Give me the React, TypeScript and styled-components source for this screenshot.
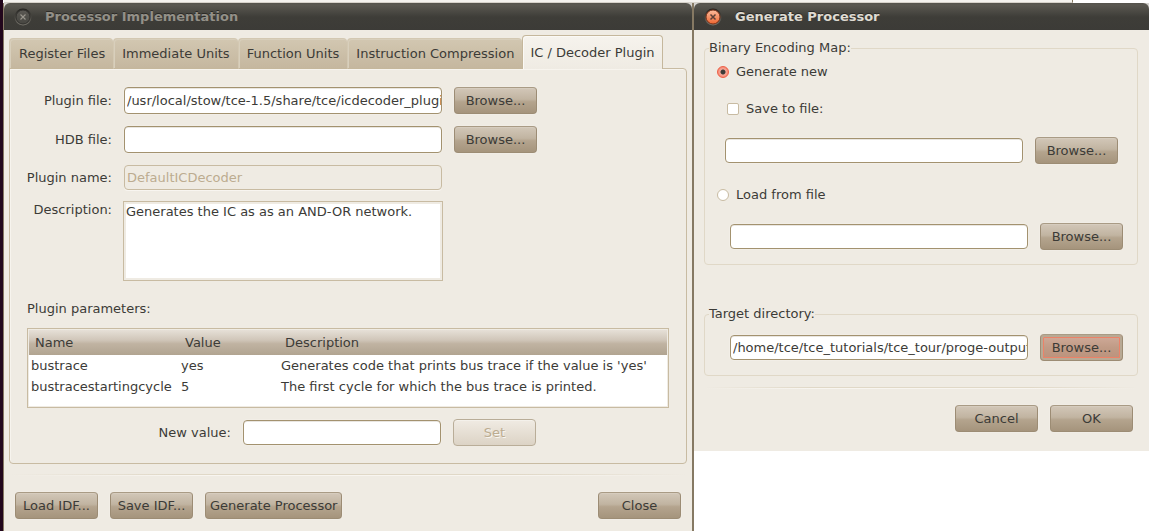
import React, { useState } from "react";
import styled, { createGlobalStyle, css } from "styled-components";

const GlobalStyle = createGlobalStyle`
  *, *::before, *::after { box-sizing: border-box; }
  body {
    margin: 0;
    background: #ffffff;
    color: #3c3b37;
    font: 13px/18px "DejaVu Sans", sans-serif;
  }
  button, input, textarea { font: inherit; color: inherit; margin: 0; }
`;

const Desktop = styled.div`
  min-height: 100vh;
  display: flex;
  flex-direction: column;
  border-left: 3px solid #22071c;
`;

const BackgroundWindow = styled.div`
  height: 3px;
  width: 93.3%;
  margin-left: 1px;
  background: #f4f2ee;
  border-right: 1px solid #857a63;
  border-bottom: 1px solid #d6d2ca;
  flex: none;
`;

const Windows = styled.div`
  flex: 1;
  display: grid;
  grid-template-columns: 691fr 455fr;
  align-items: start;
`;

const Window = styled.section<{ $main?: boolean }>`
  display: flex;
  flex-direction: column;
  min-width: 0;
  background: linear-gradient(#d4d2ce 8px, #efebe3 8px);
  ${(p) =>
    p.$main &&
    css`
      align-self: stretch;
      border: solid #867963;
      border-width: 0 2px 0 1px;
    `}
`;

const TitleBar = styled.header`
  height: 27px;
  flex: none;
  display: flex;
  align-items: center;
  gap: 13px;
  padding: 0 10px;
  border-radius: 6px 6px 0 0;
  background: linear-gradient(#55534c, #5a5851 2px, #3e3d38 14px, #3c3b37);
`;

const CloseWindow = styled.button`
  width: 18px;
  height: 18px;
  padding: 0;
  border: 0;
  background: none;
  svg { display: block; }
`;

const Title = styled.h1<{ $active?: boolean }>`
  margin: 0;
  font-size: 13px;
  line-height: 18px;
  font-weight: bold;
  color: ${(p) => (p.$active ? "#dfdbd2" : "#939088")};
  text-shadow: 0 -1px 0 #2b2a27;
`;

const MainBody = styled.div`
  padding: 5px 5px 12px;
`;

const Tabs = styled.div`
  display: flex;
  align-items: flex-end;
  position: relative;
  margin-bottom: -1px;
`;

const Tab = styled.button<{ $active: boolean }>`
  height: ${(p) => (p.$active ? 34 : 31)}px;
  padding: 0 8px;
  border: 1px solid #d3c8b2;
  border-bottom-color: #c5b79c;
  border-right-width: 0;
  border-radius: 4px 4px 0 0;
  background: linear-gradient(#d2c7b1, #c5b79f);
  box-shadow: inset 1px 1px 0 #d8cfbc;
  white-space: nowrap;
  &:first-child { padding-left: 9px; }
  ${(p) =>
    p.$active &&
    css`
      padding: 0 7px;
      border-color: #c5b79c;
      border-width: 1px 1px 0;
      background: linear-gradient(#f6f3ed, #efebe3);
      box-shadow: inset 1px 1px 0 #fbf9f5;
    `}
`;

const Panel = styled.div`
  padding: 18px 17px 17px;
  border: 1px solid #c8bba2;
  border-radius: 0 4px 4px 4px;
  box-shadow: inset 1px 1px 0 #f7f4ee;
`;

const FormRow = styled.div<{ $space?: number; $top?: boolean }>`
  display: flex;
  align-items: ${(p) => (p.$top ? "flex-start" : "center")};
  gap: 12px;
  margin-top: ${(p) => p.$space ?? 0}px;
`;

const Label = styled.label<{ $width?: number }>`
  width: ${(p) => p.$width ?? 85}px;
  flex: none;
  display: flex;
  justify-content: flex-end;
  white-space: nowrap;
`;

const TextField = styled.input<{ $width?: number; $tall?: boolean }>`
  ${(p) => (p.$width ? `flex: 0 1 ${p.$width}px;` : "flex: 1;")}
  min-width: 0;
  height: ${(p) => (p.$tall ? 27 : 25)}px;
  padding: 0 0 0 2px;
  border: 1px solid #a3926f;
  border-radius: 4px;
  background: #ffffff;
  box-shadow: 0 0 0 1px #f2eee7, inset 0 1px 0 #e9e6e1;
  outline: 0;
  &:disabled {
    color: #bcac90;
    border-color: #c8bba2;
    background: #efebe3;
    box-shadow: 0 1px 0 #f8f5f0;
  }
`;

const DescriptionBox = styled.textarea`
  && { margin: 0 -1px; }
  flex: 0 1 320px;
  min-width: 0;
  height: 80px;
  padding: 1px 2px;
  border: 1px solid #c8bba2;
  outline: 0;
  background: #ffffff;
  box-shadow: inset 0 0 0 2px #efebe3;
  resize: none;
`;

const Button = styled.button<{ $focused?: boolean }>`
  min-width: 83px;
  height: 27px;
  flex: none;
  padding: 0 4px;
  border: 1px solid #9c8c74;
  border-top-color: #a99b85;
  border-radius: 4px;
  background: linear-gradient(#d2c7b8, #c1b4a1 45%, #b4a48e 55%, #a5947c);
  box-shadow: inset 0 1px 0 #d6ccbe, 0 0 0 1px #f1ede6;
  white-space: nowrap;
  &:disabled {
    color: #bcac90;
    text-shadow: 1px 1px 0 #f8f6f1;
    border-color: #b9ad98;
    background: linear-gradient(#f0ebe3, #dcd3c5);
    box-shadow: inset 0 1px 0 #f4f1eb;
  }
  ${(p) =>
    p.$focused &&
    css`
      background: linear-gradient(#d1ab9a, #c09b86 50%, #bb917b);
      outline: 1px solid #ec8268;
      outline-offset: -4px;
      box-shadow: inset 0 0 0 2px #b8a994;
    `}
`;

const SectionTitle = styled.h2`
  margin: 19px 0 10px;
  font-size: 13px;
  line-height: 18px;
  font-weight: normal;
`;

const TableFrame = styled.div`
  min-height: 80px;
  padding: 1px;
  border: 1px solid #c8bba2;
  background: #ffffff;
  box-shadow: inset 0 0 0 1px #efebe3;
`;

const Table = styled.table`
  width: 100%;
  table-layout: fixed;
  border-collapse: collapse;
  th, td { text-align: left; font-weight: normal; white-space: nowrap; }
  thead tr { background: linear-gradient(#e6e0d7, #d0c6b9 40%, #c0b3a2 55%, #b1a491); }
  th { height: 25px; padding: 0 0 0 6px; }
  td { height: 21px; padding: 0 0 0 2px; }
`;

const NameCol = styled.col`
  width: 150px;
`;

const ValueCol = styled.col`
  width: 100px;
`;

const Separator = styled.hr<{ $space: number }>`
  height: 2px;
  margin: ${(p) => p.$space}px 0 16px;
  border: 0;
  background:
    linear-gradient(90deg, transparent, #e0d8c7 25%, #e0d8c7 75%, transparent) top / 100% 1px no-repeat,
    linear-gradient(90deg, transparent, #f8f5f0 25%, #f8f5f0 75%, transparent) bottom / 100% 1px no-repeat;
`;

const Actions = styled.footer<{ $end?: boolean }>`
  display: flex;
  gap: 12px;
  padding: 0 ${(p) => (p.$end ? 5 : 6)}px;
  justify-content: ${(p) => (p.$end ? "flex-end" : "flex-start")};
`;

const Spacer = styled.span`
  flex: 1;
`;

const DialogBody = styled.div`
  padding: 9px 11px 19px 10px;
`;

const Group = styled.fieldset`
  min-width: 0;
  margin: 0;
  padding: 0 0 14px;
  border: 1px solid #e0d8c7;
  border-radius: 4px;
  & + & { margin-top: 40px; }
`;

const Legend = styled.legend`
  margin-left: 4px;
  padding: 0;
`;

const Choice = styled.label<{ $space: number; $indent: number }>`
  display: flex;
  align-items: center;
  gap: 7px;
  margin-top: ${(p) => p.$space}px;
  padding-left: ${(p) => p.$indent}px;
`;

const Mark = styled.input`
  appearance: none;
  width: 12px;
  height: 12px;
  border: 1px solid #c8bba2;
  border-radius: ${(p) => (p.type === "radio" ? "50%" : "2px")};
  background: #ffffff;
  &[type="radio"]:checked {
    border-color: #ee5f45;
    background: radial-gradient(circle, #3c3b37 2px, #f7a797 3px, #f58a76 5px);
  }
  &[type="checkbox"]:checked { background: #f07746; }
`;

const FileRow = styled.div<{ $space: number; $shift?: boolean }>`
  display: flex;
  align-items: center;
  gap: 12px;
  margin-top: ${(p) => p.$space}px;
  padding: ${(p) => (p.$shift ? "0 14px 0 25px" : "0 19px 0 20px")};
`;

function CloseIcon({ active }: { active?: boolean }) {
  const id = active ? "close-active" : "close-idle";
  return (
    <svg width="18" height="18" viewBox="0 0 18 18" aria-hidden="true">
      <defs>
        <linearGradient id={id} x1="0" y1="0" x2="0" y2="1">
          <stop offset="0" stopColor={active ? "#fbbd9e" : "#5b5954"} />
          <stop offset="1" stopColor={active ? "#ee6530" : "#474641"} />
        </linearGradient>
        <linearGradient id={`${id}-rim`} x1="0" y1="0" x2="0" y2="1">
          <stop offset="0" stopColor="#22211e" />
          <stop offset="1" stopColor="#77746c" />
        </linearGradient>
      </defs>
      <circle cx="9" cy="9" r="8.5" fill={`url(#${id}-rim)`} />
      <circle cx="9" cy="9" r="7" fill={`url(#${id})`} stroke={active ? "#7c3218" : "#32312e"} />
      <path d="M6.5 6.5l5 5m0-5l-5 5" stroke={active ? "#5a4038" : "#9b978e"} strokeWidth={active ? 1.5 : 1.1} />
    </svg>
  );
}

const tabs = ["Register Files", "Immediate Units", "Function Units", "Instruction Compression", "IC / Decoder Plugin"];

const parameters = [
  { name: "bustrace", value: "yes", description: "Generates code that prints bus trace if the value is 'yes'" },
  { name: "bustracestartingcycle", value: "5", description: "The first cycle for which the bus trace is printed." },
];

function ImplementationWindow() {
  const [tab, setTab] = useState(4);
  return (
    <Window $main>
      <TitleBar>
        <CloseWindow aria-label="Close window"><CloseIcon /></CloseWindow>
        <Title>Processor Implementation</Title>
      </TitleBar>
      <MainBody>
        <Tabs role="tablist">
          {tabs.map((name, i) => (
            <Tab key={name} role="tab" aria-selected={i === tab} $active={i === tab} onClick={() => setTab(i)}>
              {name}
            </Tab>
          ))}
        </Tabs>
        <Panel role="tabpanel">
          <FormRow>
            <Label htmlFor="plugin-file">Plugin file:</Label>
            <TextField id="plugin-file" $width={318} $tall defaultValue="/usr/local/stow/tce-1.5/share/tce/icdecoder_plugins" />
            <Button>Browse...</Button>
          </FormRow>
          <FormRow $space={12}>
            <Label htmlFor="hdb-file">HDB file:</Label>
            <TextField id="hdb-file" $width={318} $tall />
            <Button>Browse...</Button>
          </FormRow>
          <FormRow $space={12}>
            <Label htmlFor="plugin-name">Plugin name:</Label>
            <TextField id="plugin-name" $width={318} disabled defaultValue="DefaultICDecoder" />
          </FormRow>
          <FormRow $space={11} $top>
            <Label htmlFor="description">Description:</Label>
            <DescriptionBox id="description" readOnly value="Generates the IC as as an AND-OR network." />
          </FormRow>
          <SectionTitle>Plugin parameters:</SectionTitle>
          <TableFrame>
            <Table>
              <colgroup>
                <NameCol />
                <ValueCol />
                <col />
              </colgroup>
              <thead>
                <tr><th>Name</th><th>Value</th><th>Description</th></tr>
              </thead>
              <tbody>
                {parameters.map((p) => (
                  <tr key={p.name}><td>{p.name}</td><td>{p.value}</td><td>{p.description}</td></tr>
                ))}
              </tbody>
            </Table>
          </TableFrame>
          <FormRow $space={11}>
            <Label htmlFor="new-value" $width={204}>New value:</Label>
            <TextField id="new-value" $width={198} />
            <Button disabled>Set</Button>
          </FormRow>
        </Panel>
        <Separator $space={10} />
        <Actions>
          <Button>Load IDF...</Button>
          <Button>Save IDF...</Button>
          <Button>Generate Processor</Button>
          <Spacer />
          <Button>Close</Button>
        </Actions>
      </MainBody>
    </Window>
  );
}

function GenerateWindow() {
  return (
    <Window>
      <TitleBar>
        <CloseWindow aria-label="Close window"><CloseIcon active /></CloseWindow>
        <Title $active>Generate Processor</Title>
      </TitleBar>
      <DialogBody>
        <Group>
          <Legend>Binary Encoding Map:</Legend>
          <Choice $space={6} $indent={12}>
            <Mark type="radio" name="bem" defaultChecked />
            Generate new
          </Choice>
          <Choice $space={19} $indent={22}>
            <Mark type="checkbox" />
            Save to file:
          </Choice>
          <FileRow $space={19}>
            <TextField aria-label="Save to file" />
            <Button>Browse...</Button>
          </FileRow>
          <Choice $space={22} $indent={12}>
            <Mark type="radio" name="bem" />
            Load from file
          </Choice>
          <FileRow $space={19} $shift>
            <TextField aria-label="Load from file" />
            <Button>Browse...</Button>
          </FileRow>
        </Group>
        <Group>
          <Legend>Target directory:</Legend>
          <FileRow $space={11} $shift>
            <TextField aria-label="Target directory" defaultValue="/home/tce/tce_tutorials/tce_tour/proge-output" />
            <Button $focused>Browse...</Button>
          </FileRow>
        </Group>
        <Separator $space={11} />
        <Actions $end>
          <Button>Cancel</Button>
          <Button>OK</Button>
        </Actions>
      </DialogBody>
    </Window>
  );
}

export default function App() {
  return (
    <>
      <GlobalStyle />
      <Desktop>
        <BackgroundWindow />
        <Windows>
          <ImplementationWindow />
          <GenerateWindow />
        </Windows>
      </Desktop>
    </>
  );
}
